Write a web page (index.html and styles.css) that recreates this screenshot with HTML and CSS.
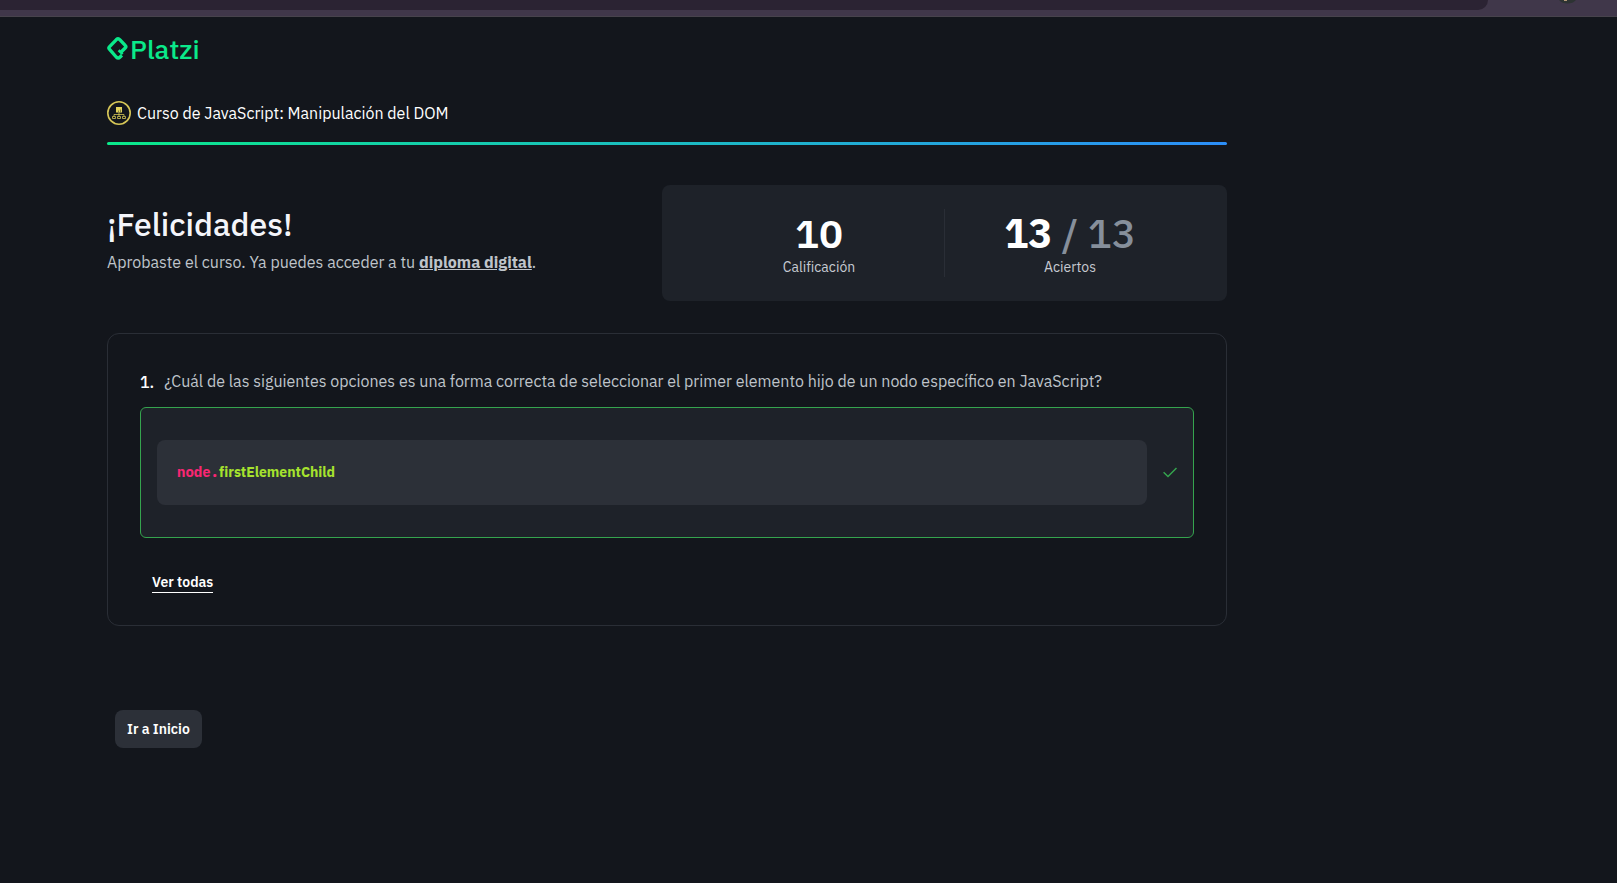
FILE: index.html
```html
<!DOCTYPE html>
<html lang="es">
<head>
<meta charset="utf-8">
<title>Resultados del examen - Platzi</title>
<meta name="viewport" content="width=device-width, initial-scale=1">
<link rel="stylesheet" href="styles.css">
</head>
<body>
<div class="browser-bar">
  <div class="tab-strip"></div>
  <svg class="browser-avatar" width="18" height="4" viewBox="0 0 18 4" aria-hidden="true"><path d="M0 0h17c-2 2.500-5 3.500-8.500 3.500S2 2.500 0 0z" fill="#2d3333"/><path d="M5 0h3v1H5z" fill="#b59a79"/></svg>
</div>
<main class="page">
  <header>
    <a class="brand" href="#" aria-label="Platzi">
      <svg width="22" height="25" viewBox="0 0 22 25" fill="none" stroke="#0ae98a" stroke-width="3.400" stroke-linejoin="round" aria-hidden="true">
        <path d="M13.800 16.300L18.200 12q1.300-1.300 0-2.600L13 3.800Q11.200 1.900 9.400 3.600L2.600 10.600q-1.400 1.400 0 2.800l6.600 7.600q2 1.900 3.900 0l1.800-1.700"/>
        <path d="M11.600 14.300l4 3.800" stroke-width="2.600"/>
      </svg>
      <span class="brand-name">Platzi</span>
    </a>
    <div class="course">
      <svg width="24" height="24" viewBox="0 0 24 24" fill="none" stroke="#d6c657" aria-hidden="true">
        <circle cx="12" cy="12" r="11.200" stroke-width="1.600"/>
        <path d="M9 6h6v5.500H9z" fill="#e3d35c" stroke="none"/>
        <path d="M11.500 9.500v2M13.500 8.500v3" stroke="#6f6935" stroke-width=".8"/>
        <path d="M12 11.500v4M7 15v-1.500h10V15M5.500 15.500h3v2h-3zM10.500 15.500h3v2h-3zM15.500 15.500h3v2h-3z" stroke-width=".8"/>
      </svg>
      <span>Curso de JavaScript: Manipulación del DOM</span>
    </div>
    <div class="progress"></div>
  </header>
  <section class="summary">
    <div class="message">
      <h1>¡Felicidades!</h1>
      <p>Aprobaste el curso. Ya puedes acceder a tu <a href="#">diploma digital</a>.</p>
    </div>
    <div class="scores">
      <div class="score"><strong class="grade">10</strong><span>Calificación</span></div>
      <div class="score"><strong>13 <em>/ 13</em></strong><span>Aciertos</span></div>
    </div>
  </section>
  <section class="questions">
    <div class="question"><span class="number">1.</span><h2>¿Cuál de las siguientes opciones es una forma correcta de seleccionar el primer elemento hijo de un nodo específico en JavaScript?</h2></div>
    <div class="answer">
      <pre><code><span class="object">node.</span><span class="property">firstElementChild</span></code></pre>
      <svg width="14" height="16" viewBox="0 0 14 16" fill="none" stroke="#35a44e" stroke-width="1.500" role="img" aria-label="Correcta"><path d="M.6 7.200L5 11.500 13.500 3"/></svg>
    </div>
    <button class="show-all" type="button"><span>Ver todas</span></button>
  </section>
  <a class="home" href="#">Ir a Inicio</a>
</main>
</body>
</html>
```
FILE: styles.css
```css
* { box-sizing: border-box; }
body {
  margin: 0;
  min-height: 100vh;
  background: #13161c;
  color: #fff;
  font: 16px/24px "IBM Plex Sans", Roboto, "Liberation Sans", sans-serif;
}
.browser-bar {
  display: flex;
  justify-content: space-between;
  height: 17px;
  padding-right: 40px;
  background: #40374a;
  border-bottom: 1px solid #47434c;
}
.tab-strip {
  flex: 1;
  max-width: 1488px;
  height: 10px;
  background: #2b2333;
  border-bottom-right-radius: 14px;
}
.page { max-width: 1334px; padding: 19px 107px 40px; }
.brand { display: flex; align-items: center; gap: 1px; height: 25px; color: #0ae98a; text-decoration: none; }
.brand-name { font-size: 27px; line-height: 25px; font-weight: 500; }
.course { display: flex; align-items: center; gap: 6px; margin-top: 40px; }
.progress { height: 3px; margin-top: 17px; border-radius: 2px; background: linear-gradient(90deg, #0ae98a, #2c8ef8); }
.summary { display: flex; align-items: center; justify-content: space-between; gap: 32px; margin-top: 40px; }
.message { padding-bottom: 8px; }
h1 { margin: 0; font-size: 32px; line-height: 40px; font-weight: 500; color: #f4f5fa; }
.message p { margin: 6px 0 0; color: #bfc4ca; }
.message a { color: inherit; font-weight: 700; }
.scores { display: flex; flex: 0 1 565px; padding: 24px 32px; background: #1e2229; border-radius: 8px; }
.score { flex: 1; display: flex; flex-direction: column; align-items: center; gap: 4px; padding-top: 4px; }
.score + .score { border-left: 1px solid #2a2e36; }
.score strong { font-size: 40px; line-height: 40px; font-weight: 700; }
.score .grade { font-weight: 600; }
.score em { font-style: normal; font-weight: 500; color: #868f9b; }
.score span { font-size: 14px; line-height: 20px; color: #c6cad1; font-variant-ligatures: none; }
.questions { margin-top: 32px; padding: 35px 32px 22px; border: 1px solid #2a2e36; border-radius: 12px; }
.question { display: flex; gap: 10px; }
.number { font-weight: 500; line-height: 26px; }
h2 { margin: 0; font-size: 16px; line-height: 24px; font-weight: 400; color: #bfc4ca; }
.answer { display: flex; align-items: center; gap: 16px; margin-top: 12px; padding: 32px 16px; background: #1e2229; border: 1px solid #35a44e; border-radius: 6px; }
.answer pre { flex: 1; margin: 0; padding: 20px; background: #2c3038; border-radius: 8px; font: 700 14px/25px "IBM Plex Sans", Roboto, "Liberation Sans", sans-serif; font-variant-ligatures: none; }
.answer code { font: inherit; font-variant-ligatures: none; }
.answer .object { color: #f92672; font-family: "IBM Plex Mono", "DejaVu Sans Mono", monospace; }
.property { color: #a6e22e; }
.show-all { display: block; margin-top: 24px; padding: 10px 12px; border: 0; background: none; color: #fff; font: 600 14px/20px "IBM Plex Sans", Roboto, "Liberation Sans", sans-serif; }
.show-all span { display: block; border-bottom: 1px solid #fff; }
.home { display: inline-block; margin: 84px 0 0 8px; padding: 9px 12px; background: #2c3038; border-radius: 8px; color: #fff; font-size: 14px; line-height: 20px; font-weight: 600; text-decoration: none; }
```
